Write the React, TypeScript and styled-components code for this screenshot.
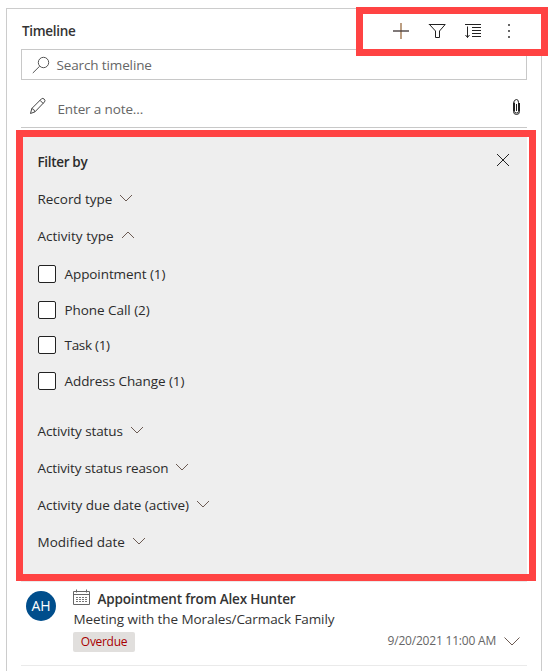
import React from "react";
import styled, { createGlobalStyle } from "styled-components";

const GlobalStyle = createGlobalStyle`
  *, *::before, *::after { box-sizing: border-box; }
  html, body { margin: 0; background: #fff; overflow: hidden; }
  body { font-family: "Open Sans", "Noto Sans", sans-serif; font-size: 13.5px; color: #333; }
  svg { display: block; flex: none; }
`;

const Page = styled.div`
  position: relative;
  width: 551px;
  height: 671px;
  padding: 8px 9px 0 6px;
  overflow: hidden;
`;

const Card = styled.section`
  height: 700px;
  padding: 0 14px;
  border: 1px solid #ccc;
`;

const Label = styled.span<{ $spacing?: number; $weight?: number }>`
  letter-spacing: ${(p) => p.$spacing ?? 0}px;
  font-weight: ${(p) => p.$weight ?? 400};
  line-height: 20px;
  white-space: nowrap;
`;

const Header = styled.header`
  display: flex;
  align-items: center;
  justify-content: space-between;
  height: 40px;
  padding: 3px 9px 0 1px;
`;

const Toolbar = styled.div`
  display: flex;
  gap: 18px;
  padding-top: 1px;
`;

const IconButton = styled.button`
  display: flex;
  padding: 0;
  border: 0;
  background: none;
  color: #222;
`;

const SearchBox = styled.div`
  display: flex;
  align-items: center;
  gap: 6.5px;
  height: 31px;
  padding-left: 10px;
  border: 1px solid #c8c8c8;
  color: #666;
`;

const NoteRow = styled.div`
  display: flex;
  align-items: center;
  height: 48px;
  padding: 5px 6px 0 8px;
  border-bottom: 1px solid #c8c8c8;
  color: #666;
`;

const NoteText = styled.div`
  flex: 1;
  padding: 5px 0 0 10.5px;
`;

const AttachButton = styled(IconButton)`
  padding-top: 2px;
`;

const FilterPanel = styled.div`
  height: 448px;
  margin: 4px 0 1px;
  padding: 11px 17px 0 16.5px;
  background: #eee;
  color: #2b2b2b;
`;

const PanelHeader = styled.div`
  display: flex;
  align-items: center;
  justify-content: space-between;
  height: 37px;
`;

const FilterGroup = styled.div`
  display: flex;
  align-items: center;
  gap: 7px;
  height: 37px;

  svg {
    margin-bottom: 2px;
  }
`;

const OptionList = styled.div`
  display: grid;
  grid-template-rows: 36px 35px 36px 35px;
  padding: 2px 0 14px 0.5px;
`;

const Option = styled.label`
  display: flex;
  align-items: center;
  gap: 8.5px;
`;

const Checkbox = styled.span`
  width: 18px;
  height: 18px;
  border: 1px solid #222;
  border-radius: 2px;
  background: #fff;
`;

const Entry = styled.article`
  display: flex;
  height: 85px;
  padding: 7px 7px 0 5px;
  border-top: 1px solid #eaeaea;
  border-bottom: 1px solid #eaeaea;
`;

const Avatar = styled.div`
  display: grid;
  place-items: center;
  width: 30px;
  height: 30px;
  margin: 2px 17px 0 0;
  padding-bottom: 1px;
  border-radius: 50%;
  background: #004e8c;
  color: #fff;
  font-size: 14px;
`;

const EntryBody = styled.div`
  flex: 1;
  display: flex;
  flex-direction: column;
`;

const EntryTitle = styled.div`
  display: flex;
  gap: 7.5px;
  height: 20px;
`;

const EntryText = styled.div`
  display: flex;
  height: 20px;
  padding-left: 0.5px;
`;

const EntryFooter = styled.div`
  display: flex;
  align-items: center;
  gap: 8px;
  height: 24px;
  color: #666;
  font-size: 12px;
`;

const Tag = styled.span`
  display: grid;
  place-items: center;
  width: 62px;
  height: 20px;
  margin: 2px auto 0 0;
  border-radius: 2px;
  background: #e1dfdd;
  color: #a80000;
`;

const Highlight = styled.div<{ $x: number; $y: number; $w: number; $h: number }>`
  position: absolute;
  left: ${(p) => p.$x}px;
  top: ${(p) => p.$y}px;
  width: ${(p) => p.$w}px;
  height: ${(p) => p.$h}px;
  border: 7px solid #ff4343;
  pointer-events: none;
`;

const Svg = ({ w, h, children }: { w: number; h: number; children: React.ReactNode }) => (
  <svg width={w} height={h} viewBox={`0 0 ${w} ${h}`} fill="none" stroke="currentColor" strokeWidth={1}>
    {children}
  </svg>
);

const Chevron = ({ up }: { up?: boolean }) => (
  <Svg w={14} h={10}>
    <path d={up ? "M1 8 7 2l6 6" : "M1 2l6 6 6-6"} stroke="#6b5a52" />
  </Svg>
);

const filtersBelow: [string, number][] = [
  ["Activity status", -0.09],
  ["Activity status reason", -0.13],
  ["Activity due date (active)", -0.03],
  ["Modified date", 0],
];

const options: [string, number][] = [
  ["Appointment (1)", -0.08],
  ["Phone Call (2)", -0.05],
  ["Task (1)", -0.3],
  ["Address Change (1)", -0.07],
];

export default function App() {
  return (
    <Page>
      <GlobalStyle />
      <Card>
        <Header>
          <Label $weight={600} $spacing={-0.31}>Timeline</Label>
          <Toolbar>
            <IconButton aria-label="Add">
              <Svg w={18} h={18}>
                <path d="M9 1v16" stroke="#a0764e" strokeWidth={1.4} />
                <path d="M1 9h16" stroke="#4a4040" strokeWidth={1.4} />
              </Svg>
            </IconButton>
            <IconButton aria-label="Filter">
              <Svg w={18} h={18}>
                <path d="M.8 2.5h16.4L11.500 9v6.500h-4V9L1.500 2.500" />
              </Svg>
            </IconButton>
            <IconButton aria-label="Sort">
              <Svg w={18} h={18}>
                <path d="M1 2.500h16M8 5.500h9M8 8.500h9M8 11.500h9M8 14.500h9M3.500 4.500v11M1.500 13l2 2.500 2-2.500" />
              </Svg>
            </IconButton>
            <IconButton aria-label="More">
              <Svg w={18} h={18}>
                <path d="M9 2v2M9 8v2M9 14v2" stroke="#666" strokeWidth={2} />
              </Svg>
            </IconButton>
          </Toolbar>
        </Header>

        <SearchBox>
          <Svg w={18} h={18}>
            <circle cx="11.5" cy="6.5" r="5.2" stroke="#555" />
            <path d="M7.700 10.200.800 17" stroke="#555" />
          </Svg>
          <Label $spacing={-0.13}>Search timeline</Label>
        </SearchBox>

        <NoteRow>
          <Svg w={18} h={18}>
            <path d="M1.500 16.500l1.300-5L12.500 1.800q1.300-1 2.700.3t.3 2.800L6 14.800zM2.800 11.500q2.300.5 3.200 3.300M11 3.300l3.200 3.200" stroke="#444" />
          </Svg>
          <NoteText><Label $spacing={-0.14}>Enter a note...</Label></NoteText>
          <AttachButton aria-label="Attach">
            <Svg w={9} h={18}>
              <path d="M4.500 6v7M2.500 4.500v9q0 1.500 2 1.500t2-1.500V4.500Q6.500 1.500 4.500 1.500T1.500 4.500v9q0 3 3 3t3-3V5" />
            </Svg>
          </AttachButton>
        </NoteRow>

        <FilterPanel>
          <PanelHeader>
            <Label $weight={600} $spacing={-0.33}>Filter by</Label>
            <IconButton aria-label="Close">
              <Svg w={14} h={18}>
                <path d="M1 1l12 12M13 1 1 13" />
              </Svg>
            </IconButton>
          </PanelHeader>
          <FilterGroup><Label $spacing={-0.03}>Record type</Label><Chevron /></FilterGroup>
          <FilterGroup><Label $spacing={0.02}>Activity type</Label><Chevron up /></FilterGroup>
          <OptionList>
            {options.map(([text, spacing]) => (
              <Option key={text}>
                <Checkbox />
                <Label $spacing={spacing}>{text}</Label>
              </Option>
            ))}
          </OptionList>
          {filtersBelow.map(([text, spacing]) => (
            <FilterGroup key={text}><Label $spacing={spacing}>{text}</Label><Chevron /></FilterGroup>
          ))}
        </FilterPanel>

        <Entry>
          <Avatar>AH</Avatar>
          <EntryBody>
            <EntryTitle>
              <Svg w={17} h={17}>
                <path d="M.5 2.500h16v13H.5zM.5 5.500h16M3.500.500v3M13.500.500v3" stroke="#666" />
                <path d="M3 8.500h11M3 10.500h11M3 12.500h11" stroke="#777" strokeDasharray="2 1" />
              </Svg>
              <Label $weight={600} $spacing={-0.17}>Appointment from Alex Hunter</Label>
            </EntryTitle>
            <EntryText><Label $spacing={-0.08}>Meeting with the Morales/Carmack Family</Label></EntryText>
            <EntryFooter>
              <Tag><Label $spacing={-0.3}>Overdue</Label></Tag>
              <Label $spacing={-0.2}>9/20/2021 11:00 AM</Label>
              <Svg w={16} h={9}>
                <path d="M.5.500 8 8 15.500.500" stroke="#6b5a52" />
              </Svg>
            </EntryFooter>
          </EntryBody>
        </Entry>
      </Card>

      <Highlight $x={356} $y={7} $w={192} $h={49} />
      <Highlight $x={16} $y={130} $w={520} $h={451} />
    </Page>
  );
}
